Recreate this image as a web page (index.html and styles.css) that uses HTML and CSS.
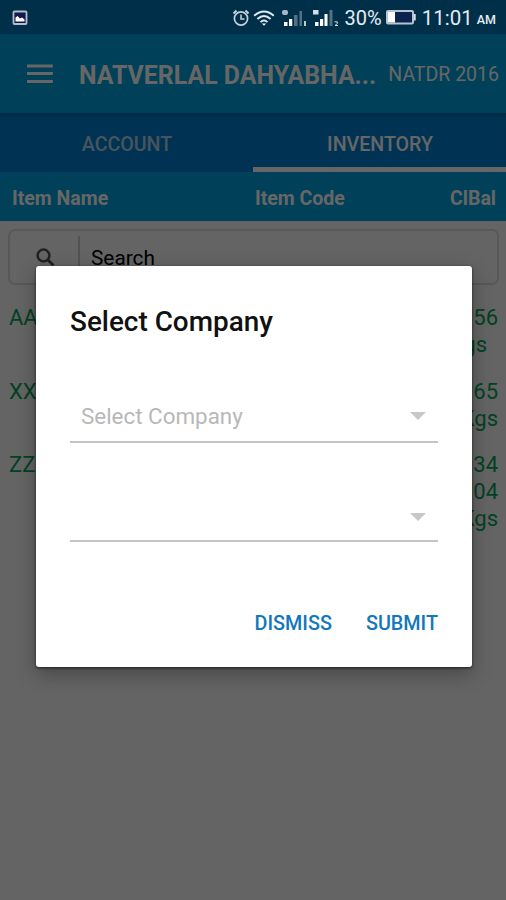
FILE: index.html
```
<!DOCTYPE html>
<html lang="en">
<head>
<meta charset="utf-8">
<title>Inventory</title>
<link rel="stylesheet" href="styles.css">
</head>
<body>
<div class="phone">
  <header class="status">
    <svg class="status-photo" viewBox="0 0 16 16" width="16" height="16"><rect x="1.500" y="1.500" width="13" height="12.500" rx="1" fill="#10194f" stroke="#b9bccb" stroke-width="1.800"/><path d="M3.500 11.500V7.500l2-1.500 2.500 2.500 2-1 2.500 2v2z" fill="#fff"/></svg>
    <div class="status-right">
      <svg width="18" height="18" viewBox="0 0 18 18" fill="none" stroke="#c9d0dc"><circle cx="9" cy="9.500" r="6.600" stroke-width="1.700"/><path d="M9 5.500V10h3.500" stroke-width="1.500"/><path d="M1.500 4.500l3-3M16.500 4.500l-3-3" stroke-width="2"/></svg>
      <svg class="wifi" width="22" height="16" viewBox="0 0 22 16" fill="none" stroke="#e2e8ef" stroke-width="1.900"><path d="M1.200 5.800Q11-2.600 20.800 5.800M4.400 9Q11 3.200 17.600 9M7.500 12.100Q11 9 14.500 12.100"/><path d="M9 13.500h4l-2 2.200z" fill="#fff" stroke="none"/></svg>
      <svg class="signal" width="26" height="18" viewBox="0 0 26 18"><rect x="1" y="1" width="6" height="5" rx="2" fill="#aab5c2"/><path d="M3 13h3.500v4H3zM8 10h3.200v7H8z" fill="#fff"/><path d="M13 6h3.500v11H13zM18.500 2H21v15h-2.500z" fill="#527086"/><path d="M24 12v5" stroke="#fff" stroke-width="1.500"/></svg>
      <svg class="signal" width="27" height="18" viewBox="0 0 27 18"><path d="M1 1h5.500v4.500H1z" fill="#d6dce5"/><path d="M3 13h3.500v4H3zM8 10h3.200v7H8zM12.500 5h3v12h-3z" fill="#fff"/><path d="M17.500 1H20.500v16h-3z" fill="#527086"/><path d="M22.500 12.800h2.800v1.700l-2.300 2h3" stroke="#d6dce5" fill="none"/></svg>
      <span class="percent">30%</span>
      <svg class="battery" width="30" height="15" viewBox="0 0 30 15"><rect x="1" y="1" width="26" height="12.500" rx="1" fill="#0b2350" stroke="#b9c3ce" stroke-width="2"/><path d="M2 2h7v10.500H2z" fill="#fff"/><path d="M28 4h1.700v6.500H28z" fill="#d9e0e8"/></svg>
      <span class="clock">11:01</span><span class="ampm">AM</span>
    </div>
  </header>
  <main class="app">
    <div class="toolbar">
      <svg width="26" height="20" viewBox="0 0 26 20" stroke="#fff" stroke-width="3"><path d="M0 2h26M0 9.500h26M0 17.500h26"/></svg>
      <h1>NATVERLAL DAHYABHA...</h1>
      <span class="period">NATDR 2016</span>
    </div>
    <nav class="tabs">
      <span class="tab">ACCOUNT</span>
      <span class="tab active">INVENTORY</span>
    </nav>
    <div class="columns"><span>Item Name</span><span>Item Code</span><span>ClBal</span></div>
    <div class="search">
      <svg width="20" height="20" viewBox="0 0 20 20" fill="none" stroke="#555"><circle cx="7.500" cy="8.500" r="5.900" stroke-width="2.500"/><path d="M11.500 12.500l6 6" stroke-width="3"/></svg>
      <span class="query">Search</span>
    </div>
    <ul class="items">
      <li><span>AA</span><span>56<br><i>gs</i></span></li>
      <li><span>XX</span><span>65<br>Kgs</span></li>
      <li><span>ZZ</span><span>34<br>04<br>Kgs</span></li>
    </ul>
  </main>
  <div class="scrim">
    <section class="dialog">
      <h2>Select Company</h2>
      <div class="select"><span>Select Company</span><b class="arrow"></b></div>
      <div class="select second"><span></span><b class="arrow"></b></div>
      <div class="actions"><button>DISMISS</button><button>SUBMIT</button></div>
    </section>
  </div>
</div>
</body>
</html>
```
FILE: styles.css
```
* { box-sizing: border-box; }
body { margin: 0; font-family: Roboto, sans-serif; }
.phone { position: relative; width: 506px; height: 900px; overflow: hidden; display: flex; flex-direction: column; }
.status { height: 34px; flex: none; background: #003049; display: flex; align-items: center; justify-content: space-between; padding: 1px 10px 0 12px; color: #e6ebf2; }
.status-right { display: flex; align-items: center; height: 34px; }
.wifi { margin-left: 3px; }
.signal { margin-left: 6px; }
.signal + .signal { margin-left: 5px; }
.percent { font-size: 20px; margin-left: 6px; line-height: 32px; padding-top: 1px; }
.battery { margin-left: 4px; }
.clock { font-size: 20.5px; margin-left: 6px; line-height: 32px; padding-top: 1px; }
.ampm { font-size: 12.5px; font-weight: 500; margin-left: 4px; padding-top: 4px; }
.app { flex: 1; background: #f9f9f9; }
.toolbar { height: 79px; background: #00a0dc; color: #fff; display: flex; align-items: center; padding: 0 7px 0 27px; }
.toolbar h1 { margin: 0 0 0 26px; font-size: 24.9px; font-weight: 700; width: 298px; white-space: nowrap; padding-top: 3px; }
.period { margin-left: 12px; font-size: 19.5px; white-space: nowrap; padding-top: 2px; }
.tabs { height: 59px; background: #0080cf; display: flex; box-shadow: inset 0 4px 4px -2px #0060a0; }
.tab { flex: 1; display: flex; align-items: center; justify-content: center; font-size: 19.6px; font-weight: 500; color: #b5d3e8; border-bottom: 5px solid transparent; padding: 8px 0 0 1px; }
.tab.active { color: #fff; border-bottom-color: #fff; }
.columns { height: 49px; background: #00a0dc; color: #fff; display: grid; grid-template-columns: 243px 1fr auto; align-items: center; padding: 3px 10px 0 12px; font-size: 19.5px; font-weight: 700; }
.search { margin: 8px 7px 0 8px; height: 56px; border: 2px solid #dcdcdc; border-radius: 7px; display: flex; align-items: center; padding-left: 26px; }
.query { margin-left: 22px; height: 42px; border-left: 2px solid #ccc; padding-left: 11px; line-height: 44px; font-size: 20.8px; color: #000; }
.items { list-style: none; margin: 19px 0 0; padding: 0 8px 0 9px; color: #08a35c; font-size: 22px; line-height: 27px; }
.items li { display: flex; justify-content: space-between; margin-bottom: 19.5px; text-align: right; }
.items i { font-style: normal; margin-right: 11px; }
.scrim { position: absolute; inset: 34px 0 0; background: rgba(0,0,0,.6); }
.dialog { width: 436px; height: 401px; margin: 232px 0 0 36px; padding: 38px 34px 0; background: #fff; border-radius: 3px; box-shadow: 0 7px 20px rgba(0,0,0,.3), 0 1px 3px rgba(0,0,0,.6); }
.dialog h2 { margin: 0; font-size: 27.9px; line-height: 36px; font-weight: 500; color: #111; }
.select { height: 58px; margin-top: 45px; border-bottom: 2px solid #c4c4c4; display: flex; align-items: center; justify-content: space-between; padding: 6px 12px 0 11px; font-size: 22.4px; color: #b8b8b8; }
.select.second { margin-top: 41px; padding-top: 9px; }
.arrow { border: 8px solid transparent; border-top-color: #c8c8c8; border-bottom: 0; }
.actions { margin-top: 67px; display: flex; justify-content: flex-end; gap: 34px; }
.actions button { border: 0; padding: 0; background: none; font: 500 19.8px/30px Roboto, sans-serif; color: #1377bb; }
```
